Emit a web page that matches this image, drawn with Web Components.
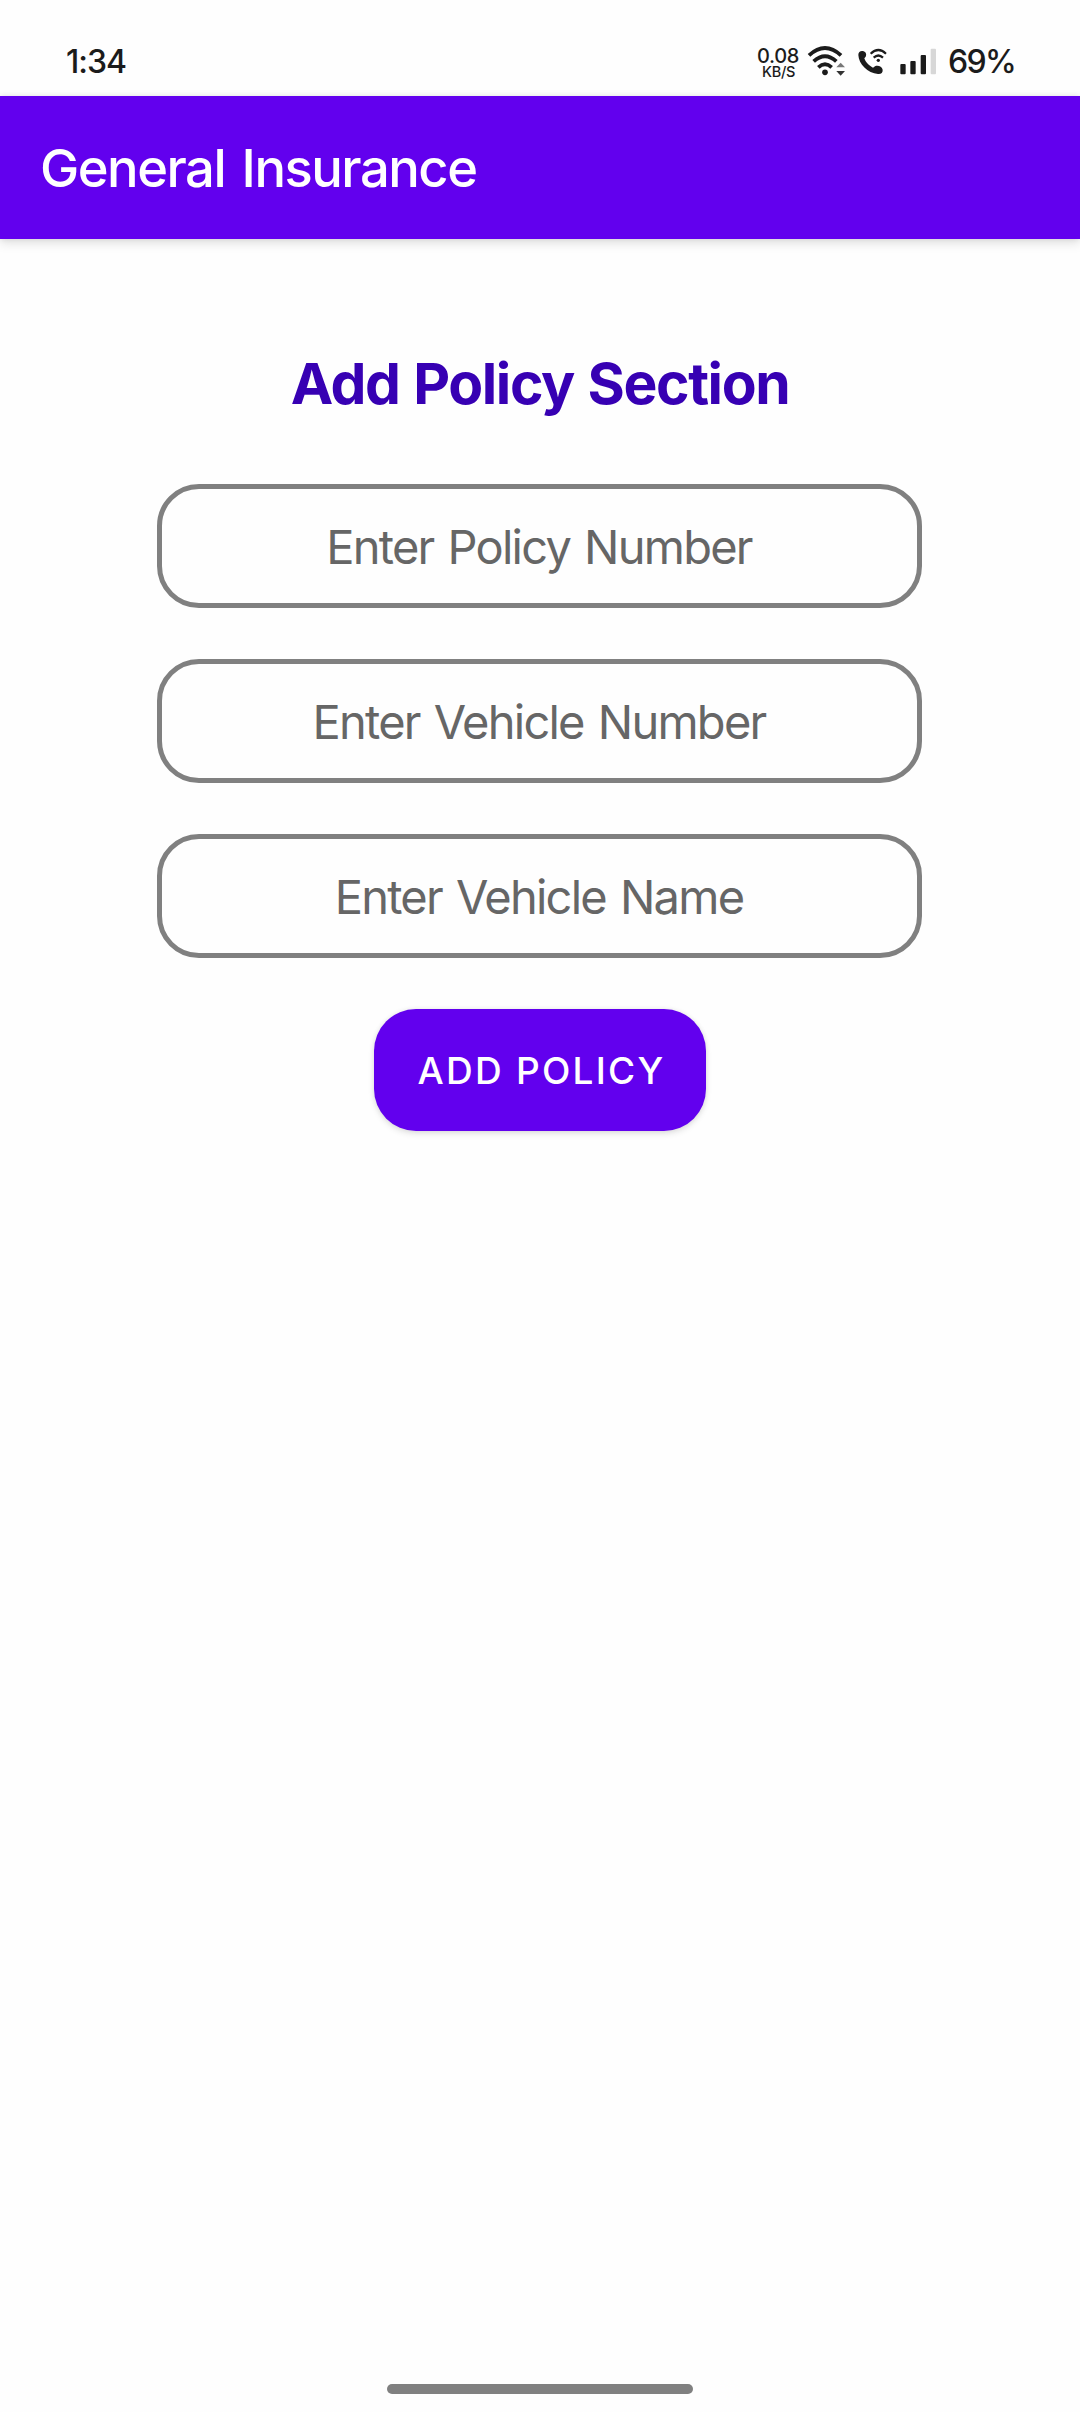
<!DOCTYPE html>
<html lang="en">
<head>
<meta charset="utf-8">
<title>General Insurance</title>
<style>
html,body{margin:0;padding:0}
body{width:1080px;height:2412px;overflow:hidden;background:#fefefe;font-family:Inter,"Liberation Sans",sans-serif}
</style>
</head>
<body>
<insurance-app></insurance-app>
<script>
const define = (name, html) => {
  const t = document.createElement('template');
  t.innerHTML = html;
  customElements.define(name, class extends HTMLElement {
    constructor() {
      super();
      this.attachShadow({mode: 'open'}).append(t.content.cloneNode(true));
    }
  });
};

define('status-bar', `
<style>
:host{display:flex;height:96px;box-sizing:border-box;padding:28px 64px 0 66px;justify-content:space-between;align-items:flex-start;color:#1b1b1b;font-weight:500}
.time,.battery{font-size:32px;line-height:67px}
.time{letter-spacing:-1px}
.battery{letter-spacing:-1.6px;margin-left:10px;width:68px;white-space:nowrap}
.right{display:flex}
.net{display:flex;flex-direction:column;align-items:center;width:44px;padding-top:19px;white-space:nowrap}
.rate{font-size:20px;line-height:18px;letter-spacing:-.3px}
.unit{font-size:14.5px;line-height:14px;letter-spacing:-.3px;padding-left:1px}
.rate,.unit{font-weight:550}
svg{display:block;height:70px;margin-top:2px}
</style>
<span class="time">1:34</span>
<div class="right">
  <div class="net"><span class="rate">0.08</span><span class="unit">KB/S</span></div>
  <svg width="138" viewBox="180 0 414 210" fill="none" stroke="#1b1b1b">
    <g stroke-width="11.5">
      <path d="M207 76Q255 32 303 76"/>
      <path d="M221 94Q255 63 289 94"/>
      <path d="M235 112Q255 94 275 112"/>
    </g>
    <circle cx="255" cy="127" r="8.5" fill="#1b1b1b" stroke="none"/>
    <path d="M289 112L302 98L315 112Z" fill="#777" stroke="none"/>
    <path d="M289 123H315L302 137Z" fill="#333" stroke="none"/>
    <path d="M355 75C355 66 361 62 368 63C377 64 381 73 377 80L373 85C376 96 387 107 399 113L405 109C414 105 426 110 428 119C429 128 423 133 414 132C383 129 356 102 355 75Z" fill="#1b1b1b" stroke="none"/>
    <g stroke-width="6.5">
      <path d="M392 71Q415 49 438 71"/>
      <path d="M401 83Q415 70 429 83"/>
    </g>
    <circle cx="415" cy="91" r="5" fill="#1b1b1b" stroke="none"/>
    <g fill="#1b1b1b" stroke="none">
      <rect x="481" y="102" width="16" height="31" rx="3"/>
      <rect x="511" y="93" width="16" height="40" rx="3"/>
      <rect x="542" y="75" width="16" height="58" rx="3"/>
      <rect x="572" y="56" width="16" height="77" rx="3" fill="#d7d7d7"/>
    </g>
  </svg>
  <span class="battery">69%</span>
</div>`);

define('app-bar', `
<style>
:host{display:flex;align-items:center;height:143px;box-sizing:border-box;padding:1px 0 0 40px;background:#6200ee;color:#fff;font-size:52.5px;font-weight:500;letter-spacing:-1.5px;word-spacing:4px;line-height:64px;box-shadow:0 5px 10px rgba(0,0,0,.1),0 0 6px rgba(0,0,0,.1)}
</style><slot></slot>`);

define('section-title', `
<style>
:host{display:block;text-align:center;padding-top:1px;font-size:57px;line-height:70px;font-weight:650;letter-spacing:-1.4px;word-spacing:1.5px;color:#3700b3}
</style><slot></slot>`);

define('text-field', `
<style>
:host{display:flex;align-items:center;justify-content:center;width:765px;height:124px;box-sizing:border-box;border:5px solid #808080;border-radius:42px;padding:2px 1px 0 0;color:#666;font-size:47px;line-height:58px;letter-spacing:-1.75px;word-spacing:2.5px;white-space:nowrap}
</style><slot></slot>`);

define('filled-button', `
<style>
:host{display:flex;align-items:center;justify-content:center;width:332px;height:122px;box-sizing:border-box;padding:1px 0 0 3px;border-radius:42px;background:#6200ee;color:#fff;font-size:37px;line-height:46px;font-weight:500;letter-spacing:2.26px;box-shadow:0 3px 6px rgba(0,0,0,.1),0 0 5px rgba(0,0,0,.08)}
</style><slot></slot>`);

define('nav-handle', `
<style>
:host{display:block;width:306px;height:10px;border-radius:5px;background:#808080}
</style>`);

define('insurance-app', `
<style>
:host{display:flex;flex-direction:column;width:1080px;height:2412px}
main{flex:1;display:flex;flex-direction:column;align-items:center;padding-top:109px}
.fields{display:flex;flex-direction:column;gap:51px;margin:65px 0 51px;padding-right:1px}
footer{display:flex;justify-content:center;padding-bottom:18px}
</style>
<status-bar></status-bar>
<app-bar>General Insurance</app-bar>
<main>
  <section-title>Add Policy Section</section-title>
  <div class="fields">
    <text-field>Enter Policy Number</text-field>
    <text-field>Enter Vehicle Number</text-field>
    <text-field>Enter Vehicle Name</text-field>
  </div>
  <filled-button>ADD POLICY</filled-button>
</main>
<footer><nav-handle></nav-handle></footer>`);
</script>
</body>
</html>
